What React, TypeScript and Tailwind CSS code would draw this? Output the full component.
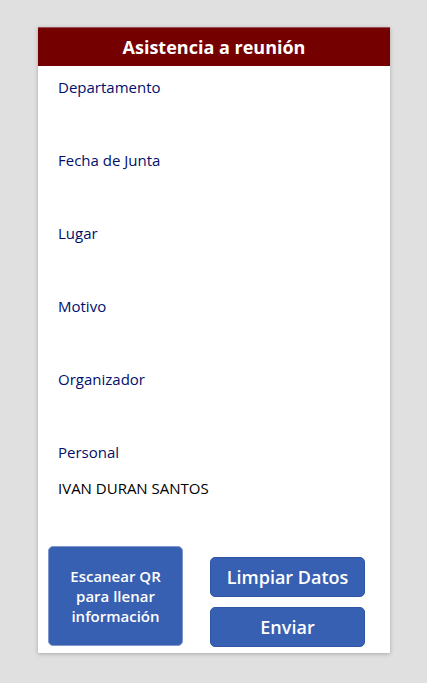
const fields = [
  { label: 'Departamento', value: '' },
  { label: 'Fecha de Junta', value: '' },
  { label: 'Lugar', value: '' },
  { label: 'Motivo', value: '' },
  { label: 'Organizador', value: '' },
  { label: 'Personal', value: 'IVAN DURAN SANTOS' },
];

function Details() {
  return (
    <dl className="flex flex-col gap-[13px] px-5 pt-[9px] text-[15px] leading-6">
      {fields.map((field) => (
        <div key={field.label} className="flex flex-col gap-3">
          <dt className="text-[#000f6b]">{field.label}</dt>
          <dd className="min-h-6 text-black">{field.value}</dd>
        </div>
      ))}
    </dl>
  );
}

function Actions() {
  const base = 'rounded-[5px] border bg-[#3860b2] font-semibold text-white';
  return (
    <div className="mt-[46px] flex items-start justify-between pr-[25px] pb-[6px] pl-[10px]">
      <button type="button" className={`${base} h-[100px] w-[135px] border-[#7f97cb] px-4 text-[15px] leading-5`}>
        Escanear QR para llenar información
      </button>
      <div className="flex w-[155px] flex-col gap-[10px] pt-[11px]">
        <button type="button" className={`${base} h-10 border-[#2f56a5] text-[18px] leading-6`}>
          Limpiar Datos
        </button>
        <button type="button" className={`${base} h-10 border-[#2f56a5] text-[18px] leading-6`}>
          Enviar
        </button>
      </div>
    </div>
  );
}

export default function App() {
  return (
    <div className="min-h-screen bg-[#e0e0e0] pt-[27px] pr-[37px] pb-[30px] pl-[38px] font-['Open_Sans',sans-serif]">
      <main className="bg-white shadow-[0_1px_4px_rgba(0,0,0,0.25)]">
        <h1 className="border-t border-[#9a5055] bg-[#750000] py-[7px] text-center text-[18px] leading-6 font-bold text-white">
          Asistencia a reunión
        </h1>
        <Details />
        <Actions />
      </main>
    </div>
  );
}
